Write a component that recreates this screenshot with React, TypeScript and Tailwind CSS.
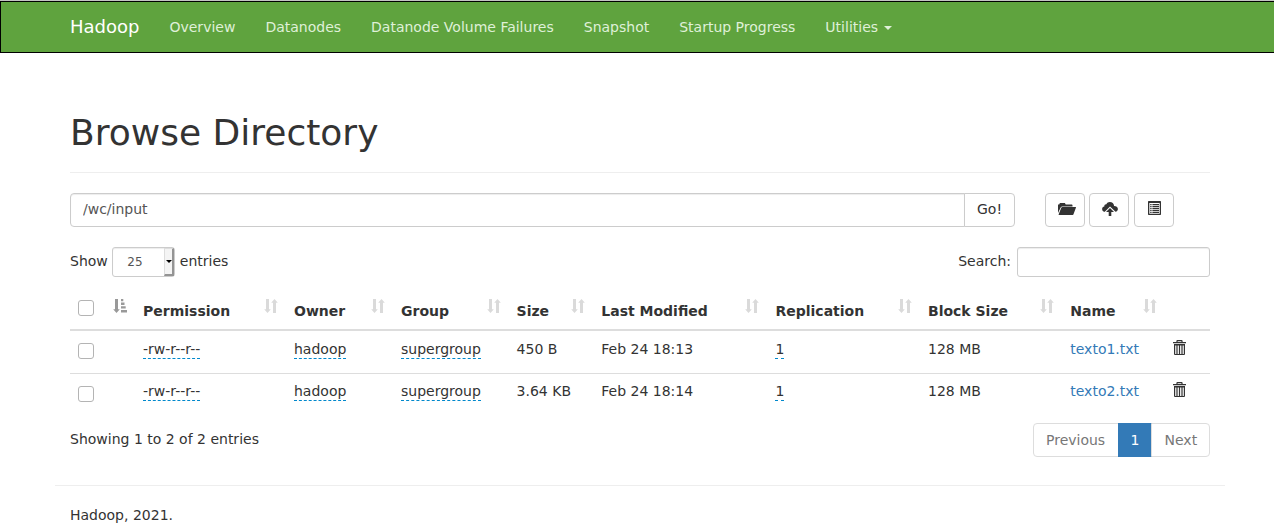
import React from "react";

const navItems = ["Overview", "Datanodes", "Datanode Volume Failures", "Snapshot", "Startup Progress"];

const columns = [
  { label: "", width: "w-[65px]" },
  { label: "Permission", width: "w-[151px]" },
  { label: "Owner", width: "w-[107px]" },
  { label: "Group", width: "w-[115.6px]" },
  { label: "Size", width: "w-[84.7px]" },
  { label: "Last Modified", width: "w-[174.2px]" },
  { label: "Replication", width: "w-[152.5px]" },
  { label: "Block Size", width: "w-[142.3px]" },
  { label: "Name", width: "w-[102.7px]" },
];

const files = [
  { size: "450 B", modified: "Feb 24 18:13", name: "texto1.txt" },
  { size: "3.64 KB", modified: "Feb 24 18:14", name: "texto2.txt" },
];

function FolderOpen() {
  return (
    <svg className="block h-[14px] w-[18px]" viewBox="0 0 18 14" fill="currentColor">
      <path d="M0 11V2.500h1.200l.7-1.500h5l.8 1.500h5.800c.7 0 1 .4 1 1v.9H4.200c-.7 0-1.100.3-1.400.9L0 11Z" />
      <path d="M4.400 5h13.100c.4 0 .6.300.4.700l-2.500 6.800c-.1.300-.4.500-.7.500H1c-.4 0-.5-.3-.4-.6l2.800-6.800c.2-.4.500-.6 1-.6Z" />
    </svg>
  );
}

function CloudUpload() {
  return (
    <svg className="block h-[14px] w-[16px]" viewBox="0 0 16 14" fill="currentColor">
      <path d="M2 9.800C.8 9.300.1 8.200.1 7c0-1.400.9-2.400 2.200-2.600-.1-1.500 1-2.300 2.100-2.100C5 .9 6.300.1 7.800.1c2.400 0 4.100 1.600 4.300 3.900 2.100 0 3.800 1.200 3.800 3 0 1.400-.9 2.500-2.400 2.800L8 4.600 2.800 9.800Z" />
      <path d="M8 5.900 12 9.900H9.300V14H6.700V9.900H4Z" />
    </svg>
  );
}

function ListAlt() {
  return (
    <svg className="block h-[14px] w-[13px]" viewBox="0 0 13 14" fill="currentColor">
      <path fillRule="evenodd" d="M.7 0h11.600q.7 0 .7.700v12.600q0 .7-.7.700H.7q-.7 0-.7-.7V.7Q0 0 .7 0ZM1.300 2v10.800h10.400V2Z" />
      <path d="M2.200 3h1.400v1.200H2.200zM4.400 3H11v1.200H4.400zM2.200 5h1.400v1.200H2.200zM4.400 5H11v1.200H4.400zM2.200 7h1.400v1.200H2.200zM4.400 7H11v1.200H4.400zM2.200 9h1.400v1.200H2.200zM4.400 9H11v1.200H4.400zM2.200 11h1.400v1H2.200zM4.400 11H11v1H4.400z" />
    </svg>
  );
}

function Trash() {
  return (
    <svg className="block h-[15px] w-[13px]" viewBox="0 0 13 15" fill="currentColor">
      <path d="M0 2h3.400V1q0-1 1-1h4.200q1 0 1 1v1H13v1.200H0ZM4.600 1.200V2h3.800v-.8Z" fillRule="evenodd" />
      <path fillRule="evenodd" d="M1 4.100h11V14q0 1-1 1H2q-1 0-1-1ZM2.200 5.500V13.900h1.200V5.500ZM4.600 5.500V13.900h1.300V5.500ZM7.100 5.500V13.900h1.300V5.500ZM9.600 5.500V13.900h1.200V5.500Z" />
    </svg>
  );
}

function SortBoth() {
  return (
    <svg className="mt-2 block h-[14px] w-[14px] shrink-0 text-[#dadada]" viewBox="0 0 14 14" fill="currentColor">
      <path d="M2 0h3v10.200h1.800L3.500 14 .2 10.200H2ZM9 14h3V3.800h1.800L10.500 0 7.200 3.800H9Z" />
    </svg>
  );
}

function SortAsc() {
  return (
    <svg className="mt-2 block h-[14px] w-[14px] shrink-0 text-[#999]" viewBox="0 0 14 14" fill="currentColor">
      <path d="M2 0h3v10.200h1.800L3.500 14 .2 10.200H2ZM8 0h2.300v2.200H8zM8 3.600h3.500v2.300H8zM8 7.300h4.700v2.300H8zM8 11h6v2.500H8z" />
    </svg>
  );
}

function Check() {
  return <input type="checkbox" className="block size-4 appearance-none rounded-[3px] border border-[#b4b4b4] bg-white" />;
}

function Editable({ children }: { children: React.ReactNode }) {
  return <span className="block h-5 w-max border-b border-dashed border-[#0088cc] leading-5">{children}</span>;
}

export default function App() {
  return (
    <div className="h-[531px] overflow-hidden bg-white font-['DejaVu_Sans',sans-serif] text-[14px] leading-5 text-[#333]">
      <header className="h-[53px] border-t border-[#c3c5c2]">
        <nav className="flex h-[52px] items-center border-y border-l border-black bg-[#5fa33e] pl-[69px] text-[#dff0d8]">
          <a className="mr-[30px] text-[18px] text-white">Hadoop</a>
          <div className="flex gap-[30px]">
            {navItems.map((item) => (
              <a key={item}>{item}</a>
            ))}
            <a className="flex items-center">
              Utilities
              <span className="ml-[6px] mt-[2px] border-x-4 border-t-4 border-x-transparent border-t-[#dff0d8]" />
            </a>
          </div>
        </nav>
      </header>

      <main className="ml-[70px] w-[1140px] pt-[60px]">
        <h1 className="h-[60px] border-b border-[#eee] text-[36px] leading-[39px]">Browse Directory</h1>

        <div className="mt-5 flex h-[34px]">
          <input
            className="w-[895px] rounded-l border border-[#ccc] px-3 pb-0.5 text-[#555] shadow-[inset_0_1px_1px_rgba(0,0,0,0.075)]"
            defaultValue="/wc/input"
          />
          <button className="-ml-px w-[51px] rounded-r border border-[#ccc] bg-white pb-0.5">Go!</button>
          <div className="ml-[30px] flex">
            <button className="flex w-10 items-start justify-center rounded border border-[#ccc] pl-[3px] pt-2">
              <FolderOpen />
            </button>
            <button className="ml-1 flex w-10 items-start justify-center rounded border border-[#ccc] pl-px pt-2">
              <CloudUpload />
            </button>
            <button className="ml-[5px] flex w-10 items-start justify-center rounded border border-[#ccc] pt-[7px]">
              <ListAlt />
            </button>
          </div>
        </div>

        <div className="mt-5 flex h-[30px] justify-between">
          <label className="flex">
            <span className="mt-1">Show</span>
            <span className="ml-[4.5px] mr-[5px] flex h-[30px] w-[62.5px] rounded-[3px] border border-[#ccc] text-[12px] text-[#555] shadow-[inset_0_1px_1px_rgba(0,0,0,0.075)]">
              <span className="flex-1 pl-[14px] leading-[28px]">25</span>
              <span className="flex w-[10px] items-center border-b-2 border-l border-r-2 border-t border-b-[#949494] border-l-[#ddd] border-r-[#949494] border-t-[#ddd] bg-[#f4f4f4]">
                <span className="ml-px border-x-[3px] border-t-[3px] border-x-transparent border-t-black" />
              </span>
            </span>
            <span className="mt-1">entries</span>
          </label>
          <label className="flex">
            <span className="mt-1">Search:</span>
            <input className="ml-[6px] h-[30px] w-[193px] rounded-[3px] border border-[#ccc] shadow-[inset_0_1px_1px_rgba(0,0,0,0.075)]" />
          </label>
        </div>

        <div className="mt-[14px] flex h-[40px] border-b-2 border-[#ddd]">
          {columns.map(({ label, width }, i) => (
            <div key={i} className={`flex justify-between pl-2 pr-2 ${width}`}>
              {i === 0 ? (
                <div className="pt-[9px]">
                  <Check />
                </div>
              ) : (
                <b className="pt-[10px] whitespace-nowrap">{label}</b>
              )}
              {i === 0 ? <SortAsc /> : <SortBoth />}
            </div>
          ))}
        </div>

        {files.map((file, i) => (
          <div key={file.name} className={`flex ${i === 0 ? "h-[42px] pt-2" : "h-[43px] border-t border-[#ddd] pt-[7px]"}`}>
            <div className={`w-[65px] pl-2 ${i === 0 ? "pt-1" : "pt-[5px]"}`}>
              <Check />
            </div>
            <div className="w-[151px] pl-2">
              <Editable>-rw-r--r--</Editable>
            </div>
            <div className="w-[107px] pl-2">
              <Editable>hadoop</Editable>
            </div>
            <div className="w-[115.6px] pl-2">
              <Editable>supergroup</Editable>
            </div>
            <div className="w-[84.7px] pl-2">{file.size}</div>
            <div className="w-[174.2px] pl-2">{file.modified}</div>
            <div className="w-[152.5px] pl-2">
              <Editable>1</Editable>
            </div>
            <div className="w-[142.3px] pl-2">128 MB</div>
            <div className="w-[102.7px] pl-2">
              <a className="text-[#337ab7]">{file.name}</a>
            </div>
            <div className="pl-[8.4px] pt-px">
              <Trash />
            </div>
          </div>
        ))}

        <div className="mt-[7px] flex h-[34px] justify-between">
          <p className="mt-[6px]">Showing 1 to 2 of 2 entries</p>
          <div className="flex leading-8">
            <a className="w-[86px] rounded-l border border-[#ddd] pl-3 text-[#777]">Previous</a>
            <a className="-ml-px w-[34px] border border-[#337ab7] bg-[#337ab7] text-center text-white">1</a>
            <a className="-ml-px w-[59px] rounded-r border border-[#ddd] pl-[12.5px] text-[#777]">Next</a>
          </div>
        </div>
      </main>

      <footer className="ml-[55px] mt-[28px] w-[1170px] border-t border-[#eee] pl-[15px] pt-[19px]">Hadoop, 2021.</footer>
    </div>
  );
}
